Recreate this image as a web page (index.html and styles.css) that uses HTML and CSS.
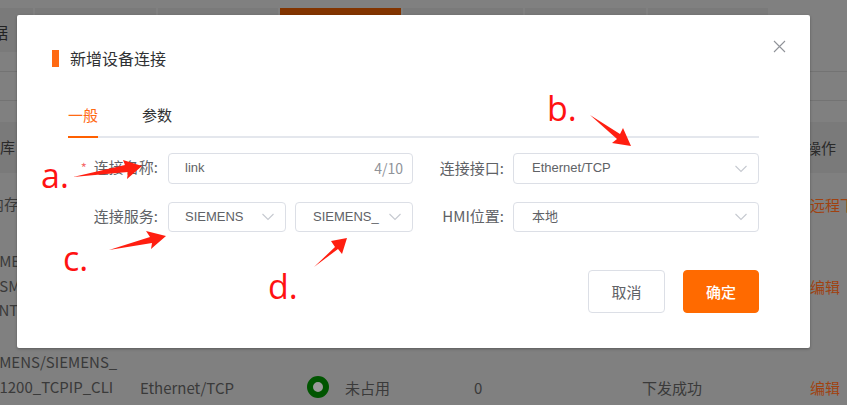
FILE: index.html
```html
<!DOCTYPE html>
<html lang="zh-CN">
<head>
<meta charset="utf-8">
<title>新增设备连接</title>
<link rel="stylesheet" href="styles.css">
</head>
<body>
<div class="page">
  <div class="top-tabs">
    <div class="top-tab first"><span>数据</span></div>
    <div class="top-tab"></div>
    <div class="top-tab"></div>
    <div class="top-tab active"></div>
    <div class="top-tab"></div>
    <div class="top-tab"></div>
    <div class="top-tab"></div>
  </div>
  <div class="rule-row"></div>
  <div class="rule-row short"></div>
  <div class="table">
    <div class="row head">
      <div class="c1 inset-head">工库</div>
      <div class="c-op head-op">操作</div>
    </div>
    <div class="row r-a">
      <div class="c1 inset-a">内存</div>
      <div class="c-op link">远程下载</div>
    </div>
    <div class="row r-b">
      <div class="c1">SIEMENS/<br>S7-SMART<br>LIENT</div>
      <div class="c-op link">编辑</div>
    </div>
    <div class="row r-c">
      <div class="c1">SIEMENS/SIEMENS_<br>S7-1200_TCPIP_CLI<br>ENT</div>
      <div class="c2">Ethernet/TCP</div>
      <div class="c3"><i class="ring"></i></div>
      <div class="c4">未占用</div>
      <div class="c5">0</div>
      <div class="c6">下发成功</div>
      <div class="c-op link">编辑</div>
    </div>
  </div>
</div>

<div class="overlay">
  <div class="dialog">
    <button class="close" aria-label="关闭">
      <svg width="14" height="14" viewBox="0 0 14 14"><path d="M1 1 12 12M12 1 1 12" fill="none" stroke="#909399" stroke-width="1.1"/></svg>
    </button>
    <div class="title"><i class="mark"></i><span>新增设备连接</span></div>
    <div class="body">
      <div class="tabs">
        <div class="tab on">一般</div>
        <div class="tab">参数</div>
      </div>
      <div class="form-row">
        <div class="field left">
          <label class="lbl"><em>*</em>连接名称:</label>
          <div class="ctl wide"><span class="val">link</span><span class="count">4/10</span></div>
        </div>
        <div class="field right">
          <label class="lbl">连接接口:</label>
          <div class="ctl sel wider"><span class="val pad2">Ethernet/TCP</span>
            <svg class="chev" width="14" height="8" viewBox="0 0 14 8"><path d="M1.5 1 7 6.5 12.5 1" fill="none" stroke="#c6c9d0" stroke-width="1.1"/></svg></div>
        </div>
      </div>
      <div class="form-row second">
        <div class="field left">
          <label class="lbl">连接服务:</label>
          <div class="pair">
            <div class="ctl sel half"><span class="val">SIEMENS</span>
              <svg class="chev" width="14" height="8" viewBox="0 0 14 8"><path d="M1.5 1 7 6.5 12.5 1" fill="none" stroke="#c6c9d0" stroke-width="1.1"/></svg></div>
            <div class="ctl sel half alt"><span class="val">SIEMENS_</span>
              <svg class="chev" width="14" height="8" viewBox="0 0 14 8"><path d="M1.5 1 7 6.5 12.5 1" fill="none" stroke="#c6c9d0" stroke-width="1.1"/></svg></div>
          </div>
        </div>
        <div class="field right">
          <label class="lbl">HMI位置:</label>
          <div class="ctl sel wider"><span class="val pad2">本地</span>
            <svg class="chev" width="14" height="8" viewBox="0 0 14 8"><path d="M1.5 1 7 6.5 12.5 1" fill="none" stroke="#c6c9d0" stroke-width="1.1"/></svg></div>
        </div>
      </div>
      <div class="actions">
        <button class="btn">取消</button>
        <button class="btn primary">确定</button>
      </div>
    </div>
  </div>
</div>

<svg class="arrows" width="847" height="405" viewBox="0 0 847 405">
  <polygon points="73,177 125,165 123,160 142,166 127,179 128,172"/>
  <polygon points="590,115 620,134 623,128 631,146 612,143 617,139"/>
  <polygon points="109,250 150,237 146,231 166,236 151,249 152,243"/>
  <polygon points="314,267 335,247 331,241 347,238 342,254 338,249"/>
</svg>
<span class="note na">a.</span>
<span class="note nb">b.</span>
<span class="note nc">c.</span>
<span class="note nd">d.</span>
</body>
</html>
```
FILE: styles.css
```css
* { box-sizing: border-box; }
html, body { margin: 0; padding: 0; }
body {
  position: relative;
  width: 847px;
  height: 405px;
  overflow: hidden;
  background: #808080;
  font-family: "Noto Sans CJK SC", "Noto Sans", sans-serif;
  color: #3a3a3a;
}
.page { width: 847px; height: 405px; overflow: hidden; padding-top: 8px; }

.top-tabs { display: flex; gap: 2px; height: 44px; margin-left: -87.5px; }
.top-tab { width: 120.5px; background: #7a7a7a; flex: none; }
.top-tab.first { display: flex; align-items: center; justify-content: flex-end; font-size: 16px; color: #222; overflow: hidden; }
.top-tab.first span { margin: 4px 25px 0 0; white-space: nowrap; }
.top-tab.active { background: #823400; }
.rule-row { height: 29px; border-bottom: 1px solid #737373; }
.rule-row:nth-of-type(2) { height: 20px; }
.rule-row.short { margin-bottom: 21px; }

.table { font-size: 15px; }
.row { position: relative; display: flex; align-items: center; overflow: hidden; }
.head { height: 51px; background: #7a7a7a; color: #2a2a2a; }
.r-a { height: 62px; }
.r-b { height: 102px; }
.r-c { height: 100px; flex: none; }
.c1 { width: 163px; margin-left: -23px; line-height: 24.5px; white-space: nowrap; flex: none; }
.inset-head { padding-left: 8px; }
.inset-a { padding-left: 12px; }
.c2 { width: 167px; flex: none; }
.c3 { width: 38px; flex: none; display: flex; }
.c4 { width: 129px; flex: none; }
.c5 { width: 168px; flex: none; }
.c6 { width: 168px; flex: none; }
.c-op { position: absolute; left: 810px; white-space: nowrap; }
.head-op { left: 806px; }
.link { color: #a04210; }
.ring { display: block; width: 22px; height: 22px; border-radius: 50%; border: 6px solid #005500; background: #999; }

.overlay { position: absolute; inset: 0; }
.dialog {
  position: relative;
  width: 793px;
  height: 333px;
  margin: 15px 0 0 17px;
  padding: 35px 51px 0 35px;
  background: #fff;
  border-radius: 2px;
  box-shadow: 0 1px 3px rgba(0,0,0,.3);
}
.close { position: absolute; top: 25px; right: 23px; width: 14px; height: 14px; padding: 0; border: 0; background: none; display: flex; }
.title { display: flex; align-items: center; gap: 11px; height: 17px; font-size: 16px; color: #303133; }
.title span { margin-top: -2px; }
.mark { display: block; width: 7px; height: 17px; background: #ff6a13; }
.body { padding-left: 16px; }
.tabs { display: flex; gap: 44px; margin-top: 31px; height: 40px; border-bottom: 2px solid #e4e7ed; font-size: 15px; color: #303133; }
.tab { height: 40px; line-height: 33px; }
.tab.on { color: #ff6a13; border-bottom: 2px solid #ff6000; }

.form-row { display: flex; margin-top: 15px; margin-bottom: 18px; }
.form-row.second { margin: 0; }
.field { display: flex; align-items: center; }
.left { width: 345px; }
.right { width: 346px; }
.lbl { font-size: 15px; line-height: 20px; margin-top: -2px; color: #606266; text-align: right; white-space: nowrap; flex: none; }
.left .lbl { width: 90px; margin-right: 10px; }
.right .lbl { width: 91px; margin-right: 9px; }
.lbl em { color: #f56c6c; font-style: normal; font-size: 13px; margin-right: 7px; }
.ctl {
  display: flex;
  align-items: center;
  justify-content: space-between;
  height: 31px;
  padding: 0 9px 0 16px;
  border: 1px solid #dcdfe6;
  border-radius: 4px;
  background: #fff;
  flex: none;
}
.second .ctl { height: 30px; }
.wide { width: 245px; }
.wider { width: 246px; }
.half { width: 118px; }
.sel { padding-right: 10px; }
.half.alt { padding-left: 17px; }
.pair { display: flex; gap: 9px; }
.val { font-family: "Liberation Sans", sans-serif; font-size: 13px; line-height: 16px; margin-top: -1px; color: #606266; white-space: nowrap; }
.val.pad2 { margin-left: 2px; }
.count { font-size: 14px; line-height: 18px; margin-top: -2px; color: #909399; }
.chev { flex: none; }

.actions { display: flex; justify-content: flex-end; gap: 18px; margin-top: 38px; }
.btn { width: 77px; height: 43px; padding: 0; border: 1px solid #dcdfe6; border-radius: 4px; background: #fff; color: #606266; font: 15px "Noto Sans CJK SC", sans-serif; }
.primary { width: 76px; background: #ff6a00; border-color: #ff6a00; color: #fff; font-weight: 500; }

.arrows { position: absolute; left: 0; top: 0; fill: #ff1e10; pointer-events: none; }
.note { position: absolute; font-family: "Open Sans", sans-serif; font-size: 34px; line-height: 40px; color: #ff1212; }
.na { left: 41px; top: 155px; }
.nb { left: 547px; top: 88px; }
.nc { left: 63px; top: 238px; }
.nd { left: 268px; top: 266px; }
```
